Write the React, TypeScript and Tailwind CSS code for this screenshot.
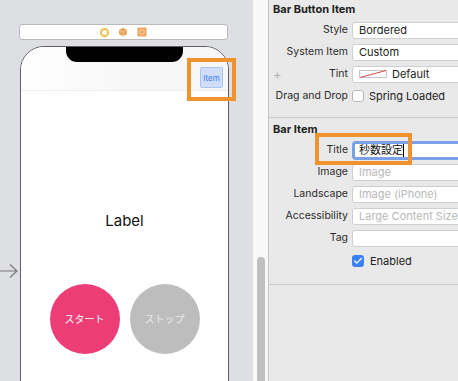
import { Check } from "lucide-react";

const font = { fontFamily: "Inter, 'Noto Sans CJK JP', sans-serif" };

function Row({ label, children, plus }: { label: string; children: React.ReactNode; plus?: boolean }) {
  return (
    <div className="flex items-center h-[22px] relative">
      {plus && <span className="absolute left-[4px] text-[13px] text-[#b5b5b5] leading-none">+</span>}
      <div className="w-[83px] shrink-0 text-right pr-[4px] text-[10.5px] text-[#2b2b2b] whitespace-nowrap">{label}</div>
      <div className="flex-1 flex items-center">{children}</div>
    </div>
  );
}

function Field({ text, placeholder }: { text?: string; placeholder?: boolean }) {
  return (
    <div
      className={`h-[17px] w-[130px] shrink-0 bg-white border border-[#cfcfcf] rounded-[3px] flex items-center pl-[6px] text-[11px] ${
        placeholder ? "text-[#b8b8b8]" : "text-[#222]"
      } whitespace-nowrap overflow-hidden`}
    >
      {text}
    </div>
  );
}

export default function App() {
  return (
    <div className="w-[458px] h-[381px] overflow-hidden flex bg-[#dedfe2]" style={font}>
      {/* storyboard canvas */}
      <div className="w-[253px] shrink-0 h-full relative bg-[#dedfe2]">
        <div className="ml-[19px] mt-[24px] w-[209px] h-[16px] bg-white border border-[#b9b9bb] rounded-[3px] flex items-center justify-center gap-[9px]">
          <div className="w-[9px] h-[9px] rounded-full border-[2px] border-[#ecbf4f]" />
          <svg width="10" height="10" viewBox="0 0 10 10">
            <path d="M5 0.8 L9 3 L9 7.2 L5 9.2 L1 7.2 L1 3 Z" fill="#eda25b" />
            <path d="M1 3 L5 5 L9 3 M5 5 L5 9.2" stroke="#f6c99b" strokeWidth="0.8" fill="none" />
          </svg>
          <svg width="10" height="10" viewBox="0 0 10 10">
            <rect x="0.5" y="0.5" width="9" height="9" rx="1" fill="#eda25b" />
            <rect x="3" y="3" width="4" height="4" fill="none" stroke="#f8d2a8" strokeWidth="1" />
          </svg>
        </div>

        {/* phone */}
        <div className="ml-[20px] mt-[6px] w-[209px] h-[400px] bg-white border-[1.5px] border-[#606060] rounded-t-[24px] relative overflow-hidden">
          <div className="h-[44px] bg-gradient-to-r from-[#ffffff] via-[#f7f7f7] to-[#f7f7f7] border-b border-[#eeeeee] flex items-end justify-end pr-[5px] pb-[2px]">
            <div className="w-[23px] h-[21px] bg-[#cfdffb] border border-[#a9c4f3] rounded-[2px] flex items-center justify-center text-[8px] text-[#3a7cf0]">
              Item
            </div>
          </div>
          <div className="absolute left-[45px] top-[-2px] w-[117px] h-[17px] bg-black rounded-b-[11px]" />
          <div className="h-[117px]" />
          <div className="text-center text-[15px] text-[#111] leading-[26px]">Label</div>
          <div className="h-[50px]" />
          <div className="flex justify-center gap-[10px]">
            <div className="w-[70px] h-[70px] rounded-full bg-[#ec3d77] flex items-center justify-center text-[10px] text-white">
              スタート
            </div>
            <div className="w-[70px] h-[70px] rounded-full bg-[#bdbdbd] flex items-center justify-center text-[10px] text-[#ececec]">
              ストップ
            </div>
          </div>
        </div>

        {/* highlight around Item */}
        <div className="absolute left-[187px] top-[58px] w-[49px] h-[43px] border-[4px] border-[#f0922e]" />

        {/* entry arrow */}
        <svg className="absolute left-0 top-[263px]" width="20" height="16" viewBox="0 0 20 16">
          <path d="M0 8 L17 8 M10 1.5 L17 8 L10 14.5" stroke="#7a7a7a" strokeWidth="1.2" fill="none" />
        </svg>
      </div>

      {/* scroll strip */}
      <div className="w-[15px] shrink-0 h-full bg-[#f8f8f8] flex justify-center">
        <div className="mt-[257px] w-[8px] h-[140px] bg-[#bfbfbf] rounded-full" />
      </div>

      {/* inspector */}
      <div className="flex-1 min-w-0 h-full bg-[#e9e9e9] border-l border-[#c6c6c6] relative overflow-hidden">
        <div className="border-b border-[#cbcbcb] pb-[10px]">
          <div className="pl-[4px] pt-[1px] h-[16px] text-[11px] font-bold text-[#222]">Bar Button Item</div>
          <div className="pt-[3px]">
            <Row label="Style">
              <Field text="Bordered" />
            </Row>
            <Row label="System Item">
              <Field text="Custom" />
            </Row>
            <Row label="Tint" plus>
              <div className="h-[17px] w-[130px] shrink-0 bg-white border border-[#cfcfcf] rounded-[3px] flex items-center pl-[6px] gap-[5px] text-[11px] text-[#222]">
                <svg width="28" height="8" viewBox="0 0 28 8">
                  <rect x="0.5" y="0.5" width="27" height="7" fill="white" stroke="#c4c4c4" />
                  <path d="M1 7.5 L27 0.5" stroke="#d24a4a" strokeWidth="1" />
                </svg>
                Default
              </div>
            </Row>
            <Row label="Drag and Drop">
              <div className="flex items-center gap-[5px] text-[11px] text-[#222] whitespace-nowrap">
                <div className="w-[12px] h-[12px] bg-white border border-[#b8b8b8] rounded-[3px]" />
                Spring Loaded
              </div>
            </Row>
          </div>
        </div>

        <div className="border-b border-[#cbcbcb] pb-[13px]">
          <div className="pl-[4px] pt-[3px] h-[17px] text-[11px] font-bold text-[#222]">Bar Item</div>
          <div className="pt-[4px]">
            <Row label="Title">
              <div className="h-[19px] w-[130px] shrink-0 bg-white border-[3px] border-[#7aa0e8] rounded-[4px] flex items-center pl-[4px] text-[11px] text-[#111]">
                秒数設定<span className="w-[1px] h-[13px] bg-black" />
              </div>
            </Row>
            <Row label="Image">
              <Field text="Image" placeholder />
            </Row>
            <Row label="Landscape">
              <Field text="Image (iPhone)" placeholder />
            </Row>
            <Row label="Accessibility">
              <Field text="Large Content Size" placeholder />
            </Row>
            <Row label="Tag">
              <Field />
            </Row>
            <Row label="">
              <div className="flex items-center gap-[6px] text-[11px] text-[#222] pt-[2px]">
                <div className="w-[12px] h-[12px] bg-[#3c82f6] rounded-[3px] flex items-center justify-center">
                  <Check size={10} color="white" strokeWidth={3} />
                </div>
                Enabled
              </div>
            </Row>
          </div>
        </div>

        {/* highlight around Title */}
        <div className="absolute left-[46px] top-[133px] w-[97px] h-[32px] border-[4px] border-[#f0922e]" />
      </div>
    </div>
  );
}
